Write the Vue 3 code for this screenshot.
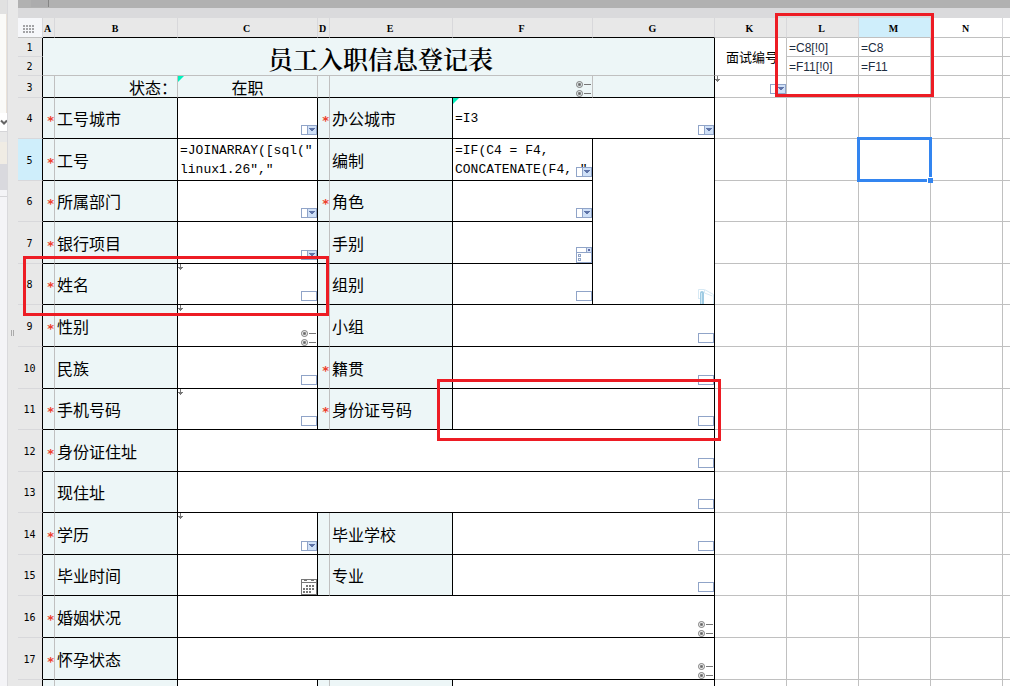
<script setup>
const columns = [
  { name: 'A', width: 12 },
  { name: 'B', width: 123 },
  { name: 'C', width: 140 },
  { name: 'D', width: 12 },
  { name: 'E', width: 123 },
  { name: 'F', width: 140 },
  { name: 'G', width: 122 },
  { name: 'K', width: 72 },
  { name: 'L', width: 72 },
  { name: 'M', width: 72, cls: 'active' },
  { name: 'N', width: 72, cls: 'plain' },
]

const label = (text, required = false) => [
  { text: required ? '*' : '', cls: 'tint star' },
  { text, cls: 'tint label' },
]
const value = (icon, extra = {}) => ({ cls: 'value', icon, ...extra })

const free = (extra = {}) => ['K', 'L', 'M', 'N', ''].map((c) => ({ cls: 'free', ...(extra[c] || {}) }))

const rows = [
  {
    n: 1, h: 19,
    cells: [
      { text: '员工入职信息登记表', cls: 'tint title', span: 7, rows: 2 },
      ...free({
        K: { text: '面试编号', cls: 'free interview', rows: 2 },
        L: { text: '=C8[!0]', cls: 'free formula-small' },
        M: { text: '=C8', cls: 'free formula-small' },
      }),
    ],
  },
  {
    n: 2, h: 19,
    cells: free({
      L: { text: '=F11[!0]', cls: 'free formula-small' },
      M: { text: '=F11', cls: 'free formula-small' },
    }).slice(1),
  },
  {
    n: 3, h: 22,
    cells: [
      { cls: 'tint soft' },
      { text: '状态：', cls: 'tint soft right' },
      { text: '在职', cls: 'tint soft center', corner: true },
      { cls: 'tint soft' },
      { cls: 'tint soft', span: 2, icon: 'radio' },
      { cls: 'tint' },
      ...free({ K: { cls: 'free', arrow: true, icon: 'combo' } }),
    ],
  },
  { n: 4, h: 41, cells: [...label('工号城市', true), value('combo'), ...label('办公城市', true), value('combo', { span: 2, text: '=I3', corner: true }), ...free()] },
  {
    n: 5, h: 42, active: true,
    cells: [
      ...label('工号', true),
      value('', { text: '=JOINARRAY([sql("\nlinux1.26","' }),
      ...label('编制'),
      value('combo', { text: '=IF(C4 = F4,\nCONCATENATE(F4, "' }),
      value('image', { rows: 4 }),
      ...free({ M: { cls: 'free', selected: true } }),
    ],
  },
  { n: 6, h: 41, cells: [...label('所属部门', true), value('combo'), ...label('角色', true), value('combo'), ...free()] },
  { n: 7, h: 42, cells: [...label('银行项目', true), value('combo'), ...label('手别'), value('checks'), ...free()] },
  { n: 8, h: 41, cells: [...label('姓名', true), value('text', { arrow: true }), ...label('组别'), value('text'), ...free()] },
  { n: 9, h: 42, cells: [...label('性别', true), value('radio', { arrow: true }), ...label('小组'), value('text', { span: 2 }), ...free()] },
  { n: 10, h: 42, cells: [...label('民族'), value('text'), ...label('籍贯', true), value('text', { span: 2 }), ...free()] },
  { n: 11, h: 41, cells: [...label('手机号码', true), value('text', { arrow: true }), ...label('身份证号码', true), value('text', { span: 2 }), ...free()] },
  { n: 12, h: 42, cells: [...label('身份证住址', true), value('text', { span: 5 }), ...free()] },
  { n: 13, h: 41, cells: [...label('现住址'), value('text', { span: 5 }), ...free()] },
  { n: 14, h: 42, cells: [...label('学历', true), value('combo', { arrow: true }), ...label('毕业学校'), value('text', { span: 2 }), ...free()] },
  { n: 15, h: 41, cells: [...label('毕业时间'), value('calendar'), ...label('专业'), value('text', { span: 2 }), ...free()] },
  { n: 16, h: 42, cells: [...label('婚姻状况', true), value('radio', { span: 5 }), ...free()] },
  { n: 17, h: 42, cells: [...label('怀孕状态', true), value('radio', { span: 5 }), ...free()] },
  { n: '', h: 41, cells: [...label(''), value(''), ...label(''), value('', { span: 2 }), ...free()] },
]

const dots = [0, 3, 6].flatMap((y) => [0, 3, 6, 9].map((x) => ({ x, y })))
const days = [
  [6, 7], [9, 7], [12, 7],
  [3, 10], [6, 10], [9, 10], [12, 10],
  [3, 13], [6, 13], [9, 13],
]
</script>

<template>
  <div class="page">
    <aside class="panel">
      <div class="panel-head"></div>
      <div class="panel-list"></div>
      <div class="panel-scroll">
        <svg width="7" height="18" viewBox="0 0 7 18" aria-hidden="true">
          <path d="M1 7.5L4 10.5L7 7.5" fill="none" stroke="#666" stroke-width="2" />
        </svg>
      </div>
      <div class="panel-gap"></div>
      <div class="panel-tab"></div>
      <div class="panel-bar"></div>
      <div class="panel-rest"></div>
    </aside>
    <div class="gutter"><span class="grip"></span></div>

    <main class="main">
      <div class="topbar"><span class="tab"></span></div>
      <div class="strip"></div>
      <table class="sheet">
        <colgroup>
          <col class="col-num" />
          <col v-for="c in columns" :key="c.name" :style="{ width: c.width + 'px' }" />
          <col />
        </colgroup>
        <thead>
          <tr>
            <th class="corner-cell">
              <svg width="11" height="8" viewBox="0 0 11 8" fill="#a3a3a6" aria-hidden="true">
                <rect v-for="(d, i) in dots" :key="i" :x="d.x" :y="d.y" width="2" height="2" />
              </svg>
            </th>
            <th v-for="(c, i) in columns" :key="c.name" scope="col" :class="[c.cls, { form: i < 7 }]">{{ c.name }}</th>
            <th class="plain"></th>
          </tr>
        </thead>
        <tbody>
          <tr v-for="(r, ri) in rows" :key="ri" :style="{ height: r.h + 'px' }">
            <th scope="row" :class="{ active: r.active }">{{ r.n }}</th>
            <td v-for="(c, ci) in r.cells" :key="ci" :class="c.cls" :colspan="c.span || 1" :rowspan="c.rows || 1">
              <span v-if="c.text" class="text">{{ c.text }}</span>
              <svg v-if="c.corner" class="corner" width="6" height="6" viewBox="0 0 6 6" aria-hidden="true">
                <path d="M0 0h6l-6 6z" fill="#00f2be" />
              </svg>
              <svg v-if="c.arrow" class="corner" width="5" height="7" viewBox="0 0 5 7" aria-hidden="true">
                <path d="M2 0h1v3h2v1h-1v1h-1v1h-1v-1h-1v-1h-1v-1h2z" fill="#777" />
              </svg>
              <svg v-if="c.icon" class="icon" width="16" height="16" viewBox="0 0 16 16" aria-hidden="true">
                <rect v-if="c.icon === 'text'" x=".5" y="3.5" width="15" height="9" fill="#fff" stroke="#90a4c8" />
                <g v-if="c.icon === 'combo'">
                  <rect x=".5" y="3.5" width="15" height="9" fill="#fff" stroke="#90a4c8" />
                  <rect x="6.5" y="3.5" width="9" height="9" fill="#cfe0f7" stroke="#90a4c8" />
                  <path d="M8 6h6v1h-1v1h-1v1h-2v-1h-1v-1h-1z" fill="#5f74a8" />
                </g>
                <g v-if="c.icon === 'radio'" stroke="#777" fill="none">
                  <circle cx="3.5" cy="3.5" r="3" />
                  <circle cx="3.5" cy="3.5" r="1.2" fill="#666" />
                  <circle cx="3.5" cy="12.5" r="3" />
                  <circle cx="3.5" cy="12.5" r="1.2" fill="#666" />
                  <path d="M8 3.5h7M8 12.5h7" />
                </g>
                <g v-if="c.icon === 'checks'" fill="none" stroke="#90a4c8">
                  <rect x=".5" y=".5" width="15" height="15" fill="#fff" />
                  <path d="M0 5.5h16M10.500 0v5" />
                  <rect x="11" y="1" width="4" height="4" fill="#d6e3f7" stroke="none" />
                  <rect x="12" y="2" width="2" height="2" fill="#5f6ca8" stroke="none" />
                  <rect x="2.5" y="7.5" width="2" height="2" />
                  <rect x="2.5" y="11.5" width="2" height="2" />
                </g>
                <g v-if="c.icon === 'calendar'">
                  <rect x=".5" y=".5" width="15" height="15" fill="#fff" stroke="#777" />
                  <path d="M0 3.500h16" stroke="#777" />
                  <path d="M3 1.500h3M10 1.500h3" stroke="#777" />
                  <rect v-for="(d, i) in days" :key="i" :x="d[0] - 1" :y="d[1] - 1" width="2" height="2" fill="#777" />
                </g>
                <g v-if="c.icon === 'image'" fill="none">
                  <path d="M.5 11V1.500h6l9 5V16M1 11l2-2M6.500 2v3l8 3" stroke="#d7e9f4" />
                  <path d="M2 16V5q0-2 2-2t2 2v11z" fill="#9fcbe3" />
                  <path d="M3.500 5v11" stroke="#cfe8f4" />
                </g>
              </svg>
              <span v-if="c.selected" class="selection"><span class="handle"></span></span>
            </td>
          </tr>
        </tbody>
      </table>
    </main>

    <div class="mark mark-formulas"></div>
    <div class="mark mark-name"></div>
    <div class="mark mark-id"></div>
  </div>
</template>

<style>
html,
body {
  overflow: hidden;
  background: #fff;
}
</style>

<style scoped>
.page {
  position: relative;
  display: flex;
  height: 100vh;
  overflow: hidden;
  background: #fff;
  color: #000;
  font-family: "Noto Sans CJK SC", sans-serif;
}
.panel {
  display: flex;
  flex-direction: column;
  flex: none;
  width: 8px;
  box-sizing: border-box;
  border-right: 1px solid #d9d9dc;
  background: #f4f4f7;
}
.panel-head { height: 14px; background: #e1e1e1; }
.panel-list { height: 99px; background: #fafaf8; border-right: 1px solid #eae2d8; }
.panel-scroll { height: 18px; background: #fff; }
.panel-scroll svg { display: block; }
.panel-gap { height: 11px; background: #e8e8e8; border-top: 1px solid #d5d5d8; box-sizing: border-box; }
.panel-tab { height: 22px; background: #f0ece4; }
.panel-bar { height: 26px; background: #d9d9de; }
.panel-rest { margin-top: 6px; border-top: 1px solid #d5d5d8; flex: 1; }
.gutter {
  display: flex;
  flex: none;
  align-items: center;
  width: 10px;
  padding-bottom: 20px;
  box-sizing: border-box;
  background: #e8e8e8;
}
.grip {
  width: 3px;
  height: 6px;
  margin-left: 3px;
  box-sizing: border-box;
  border: solid #aaa;
  border-width: 0 1px;
}
.main { flex: 1; min-width: 0; }
.topbar { display: flex; height: 8px; background: #b1b1b1; }
.tab {
  width: 17px;
  height: 7px;
  margin-left: 13px;
  border-right: 1px solid #858585;
  background: #acacad;
}
.strip { height: 10px; background: #dadadc; }

.sheet {
  width: 100%;
  table-layout: fixed;
  border-collapse: separate;
  border-spacing: 0;
}
.col-num { width: 25px; }
th,
td {
  position: relative;
  box-sizing: border-box;
  padding: 0;
  vertical-align: middle;
}
th {
  background: #e8e8e8;
  font: 10px/12px "DejaVu Sans Mono", monospace;
  text-align: center;
  border: solid #d8d8db;
  border-width: 0 1px 1px 0;
  padding: 2px 1px 0 0;
}
thead tr { height: 20px; }
thead th {
  border-bottom-color: #c0c0c0;
  font: bold 10px/12px "Liberation Serif", serif;
  padding: 3px 2px 0 0;
}
thead th.form { border-bottom-color: #000; }
th.corner-cell { background: #f6f7fa; padding: 2px 4px 0 0; }
.corner-cell svg { display: block; margin: 0 auto; }
th.active { background: #cfeefb; }
th.plain { background: #fff; }
tbody th { border-right-color: #000; }
th:last-child:not([scope]),
td.free:last-child { border-right-width: 0; }

td {
  border: solid #000;
  border-width: 0 1px 1px 0;
  font-size: 16px;
  line-height: 20px;
  white-space: pre;
}
.text { display: block; }
.tint { background: #edf6f7; }
.title {
  border-bottom-color: #c0c0c0;
  font: 600 25px/30px "Noto Serif CJK SC", "Noto Sans CJK SC", serif;
  text-align: center;
  padding: 2px 0 0 4px;
}
.soft { border-right-color: #c0c0c0; }
.right { text-align: right; }
.center { text-align: center; }
.label { padding-left: 2px; }
.star {
  border-right-color: #c0c0c0;
  color: #ee402b;
  font: bold 13px/14px "DejaVu Sans", sans-serif;
  text-align: right;
  padding-top: 6px;
}
.value {
  background: #fff;
  padding-left: 2px;
  font: 13px/19px "Liberation Mono", monospace;
}
.free { background: #fff; border-color: #c0c0c0; }
.formula-small {
  padding: 2px 0 0 2px;
  color: #1c2c40;
  font: 12px/16px "Liberation Sans", sans-serif;
}
.interview {
  padding-left: 11px;
  font-size: 13px;
}

.corner { position: absolute; top: 0; left: 0; }
.icon { position: absolute; right: 0; bottom: 0; }
.selection {
  position: absolute;
  inset: -2px;
  z-index: 2;
  border: 3px solid #3385f0;
}
.handle {
  position: absolute;
  right: -4px;
  bottom: -4px;
  width: 5px;
  height: 5px;
  border: solid #fff;
  border-width: 1px 0 0 1px;
  background: #3385f0;
}
.mark {
  position: absolute;
  z-index: 3;
  box-sizing: border-box;
  border: 3px solid #ed1c24;
}
.mark-formulas { left: 775px; top: 13px; width: 159px; height: 84px; }
.mark-name { left: 23px; top: 256px; width: 306px; height: 60px; }
.mark-id { left: 437px; top: 379px; width: 284px; height: 62px; }
</style>
